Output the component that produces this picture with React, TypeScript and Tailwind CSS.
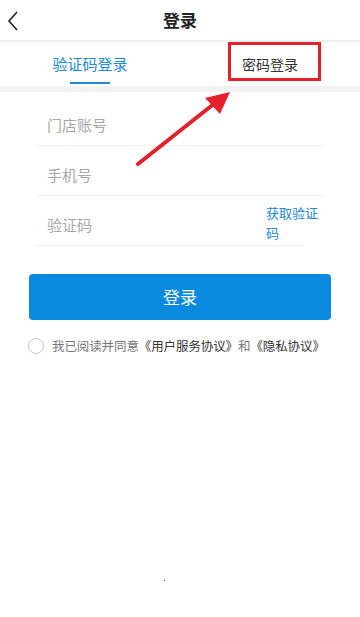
import React, { useState } from 'react';

const font = { fontFamily: '"Noto Sans CJK SC", "Noto Sans", sans-serif' };

const Field = ({ placeholder, line, action }: { placeholder: string; line: string; action?: boolean }) => (
  <div className={`flex h-[50px] items-end pb-[9px] ${line}`}>
    <span className="flex-1 pl-[11px] text-[15px] leading-[22px] text-[#a8a8a8]">{placeholder}</span>
    {action && (
      <span className="mb-[-7px] mr-[-14px] w-[52px] text-[13px] leading-[20px] text-[#2388d6]">获取验证码</span>
    )}
  </div>
);

export default function App() {
  const [agree, setAgree] = useState(false);

  return (
    <div className="relative h-[617px] w-[360px] overflow-hidden bg-white" style={font}>
      {/* header */}
      <div className="relative flex h-[42px] items-center justify-center border-b-[2px] border-[#f0f0f0]">
        <button className="absolute left-[6px] top-[10px] text-[#222]">
          <svg width="14" height="22" viewBox="0 0 14 22" fill="none" stroke="currentColor" strokeWidth="1.6">
            <path d="M11 2 L3 11 L11 20" />
          </svg>
        </button>
        <span className="text-[17px] font-bold text-[#222]">登录</span>
      </div>

      {/* tabs */}
      <div className="flex h-[44px]">
        <div className="relative flex w-1/2 items-center justify-center">
          <span className="text-[15px] text-[#2189d8]">验证码登录</span>
          <span className="absolute bottom-[2px] left-[70px] h-[2px] w-[40px] bg-[#2189d8]" />
        </div>
        <div className="flex w-1/2 items-center justify-center">
          <span className="text-[14px] text-[#333]">密码登录</span>
        </div>
      </div>
      <div className="h-[6px] bg-[#f2f2f2]" />

      {/* form */}
      <div className="px-[36px] pt-[4px]">
        <Field placeholder="门店账号" line="border-b border-[#f1f1f1]" />
        <div className="pl-[11px]">
          <Field placeholder="手机号" line="border-b border-[#f1f1f1] -ml-[11px]" />
        </div>
        <Field placeholder="验证码" line="border-b border-[#f1f1f1] mr-[20px]" action />
      </div>

      <div className="px-[29px] pt-[28px]">
        <button className="flex h-[46px] w-full items-center justify-center rounded-[4px] bg-[#0a8ade] text-[17px] text-white">
          登录
        </button>
      </div>

      <div className="flex items-center px-[28px] pt-[17px]">
        <button
          onClick={() => setAgree(!agree)}
          className={`h-[16px] w-[16px] shrink-0 rounded-full border border-[#c8c8c8] ${agree ? 'bg-[#0a8ade]' : ''}`}
        />
        <span className="ml-[8px] whitespace-nowrap text-[12.5px] tracking-[-0.1px] text-[#777]">
          我已阅读并同意<span className="text-[#333]">《用户服务协议》</span>和<span className="text-[#333]">《隐私协议》</span>
        </span>
      </div>

      <span className="absolute left-[164px] top-[580px] h-[1px] w-[1px] bg-[#555]" />

      {/* annotation */}
      <div className="pointer-events-none absolute left-[228px] top-[42px] h-[39px] w-[93px] border-[3px] border-[#e3202b]" />
      <svg className="pointer-events-none absolute left-0 top-0" width="360" height="617">
        <line x1="138" y1="164" x2="215" y2="103" stroke="#e3202b" strokeWidth="4" strokeLinecap="round" />
        <polygon points="230,92 205,98 220,114" fill="#e3202b" />
      </svg>
    </div>
  );
}
